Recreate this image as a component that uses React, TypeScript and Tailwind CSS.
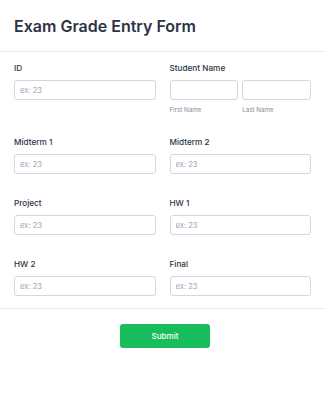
import React from 'react';

const font = { fontFamily: 'Inter, "Noto Sans", sans-serif' };

interface FieldProps {
  label: string;
}

const Field: React.FC<FieldProps> = ({ label }) => (
  <div>
    <div className="text-[8.2px] leading-[12px] font-medium text-[#2c3345] mb-[6px]">{label}</div>
    <input
      className="block w-full h-[20px] px-[5px] text-[7.6px] border border-[#d3d7e1] rounded-[3px] bg-white text-[#2c3345] placeholder:text-[#a0a6b5] outline-none"
      placeholder="ex: 23"
    />
  </div>
);

const NameField: React.FC = () => (
  <div>
    <div className="text-[8.2px] leading-[12px] font-medium text-[#2c3345] mb-[6px]">Student Name</div>
    <div className="flex gap-[4px]">
      <div className="flex-1">
        <input className="block w-full h-[20px] border border-[#d3d7e1] rounded-[3px] bg-white outline-none" />
        <div className="mt-[7px] text-[6.2px] leading-[6px] text-[#868c9a]">First Name</div>
      </div>
      <div className="flex-1">
        <input className="block w-full h-[20px] border border-[#d3d7e1] rounded-[3px] bg-white outline-none" />
        <div className="mt-[7px] text-[6.2px] leading-[6px] text-[#868c9a]">Last Name</div>
      </div>
    </div>
  </div>
);

export default function App() {
  return (
    <div className="w-[325px] h-[400px] bg-white" style={font}>
      <div className="h-[52px] px-[14px] flex items-center border-b border-[#e6e8ee]">
        <h1 className="text-[16px] font-semibold text-[#2c3345]">Exam Grade Entry Form</h1>
      </div>

      <div className="px-[14px] pt-[10px] pb-[12px] grid grid-cols-2 gap-x-[14px] gap-y-[23px] border-b border-[#eceef2]">
        <Field label="ID" />
        <NameField />
        <Field label="Midterm 1" />
        <Field label="Midterm 2" />
        <Field label="Project" />
        <Field label="HW 1" />
        <Field label="HW 2" />
        <Field label="Final" />
      </div>

      <div className="flex justify-center pl-[5px] pt-[15px]">
        <button className="w-[90px] h-[24px] rounded-[3px] bg-[#18bd5b] text-white text-[8px] font-medium">Submit</button>
      </div>
    </div>
  );
}
